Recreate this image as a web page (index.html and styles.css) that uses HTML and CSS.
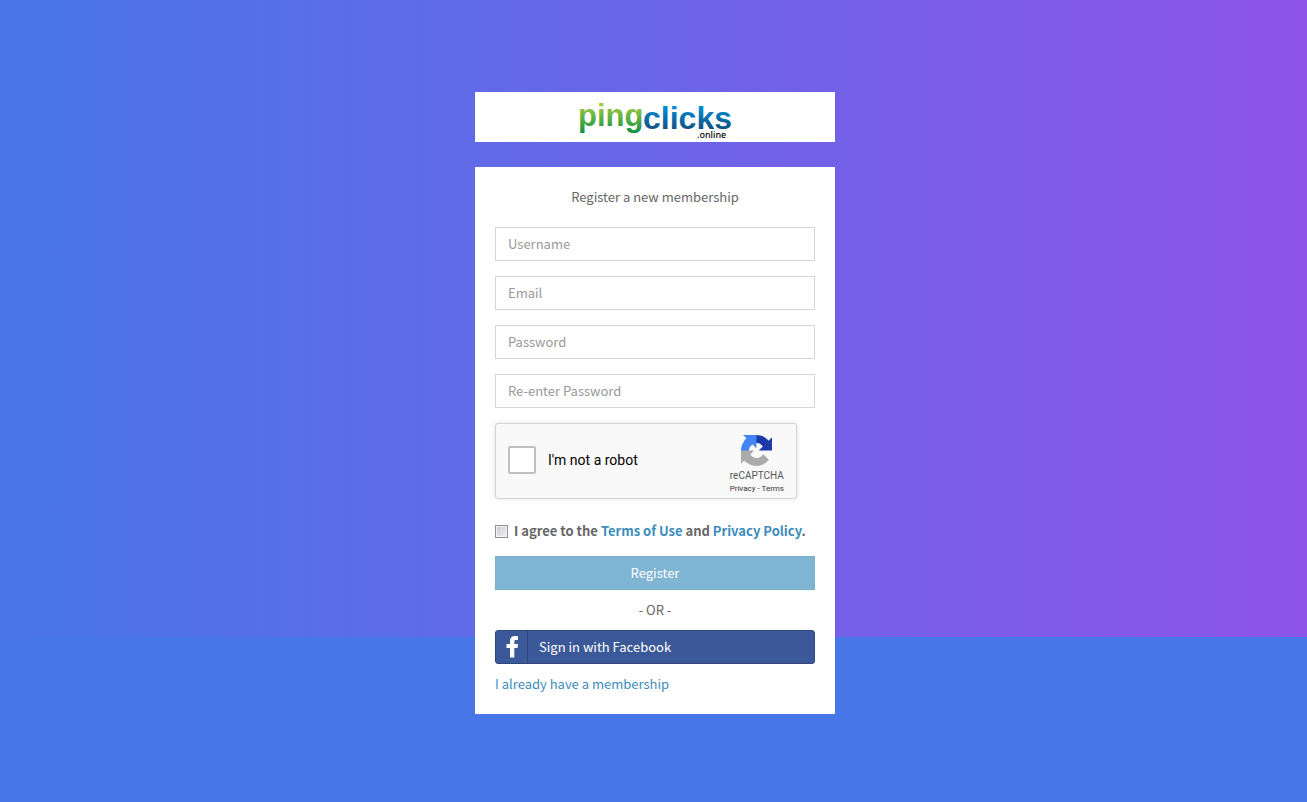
FILE: index.html
```html
<!DOCTYPE html>
<html lang="en">
<head>
<meta charset="utf-8">
<title>Register | pingclicks.online</title>
<meta name="viewport" content="width=device-width, initial-scale=1">
<link rel="stylesheet" href="styles.css">
</head>
<body>
<main class="register">
  <header class="logo">
    <svg class="logo-art" viewBox="0 0 160 50" role="img" aria-label="pingclicks.online">
      <defs>
        <linearGradient id="leaf" gradientUnits="userSpaceOnUse" x1="0" y1="12" x2="0" y2="42">
          <stop offset="0" stop-color="#a9cc42"/><stop offset="1" stop-color="#0b8f45"/>
        </linearGradient>
        <linearGradient id="sea" gradientUnits="userSpaceOnUse" x1="0" y1="14" x2="0" y2="40">
          <stop offset="0" stop-color="#0090d8"/><stop offset="1" stop-color="#124a78"/>
        </linearGradient>
      </defs>
      <text class="logo-ping" x="3" y="34" fill="url(#leaf)">ping</text>
      <text class="logo-clicks" x="68" y="37" fill="url(#sea)">clicks</text>
      <text class="logo-online" x="122" y="46">.online</text>
    </svg>
  </header>
  <form class="card">
    <p class="intro">Register a new membership</p>
    <input class="field" type="text" placeholder="Username" aria-label="Username">
    <input class="field" type="email" placeholder="Email" aria-label="Email">
    <input class="field" type="password" placeholder="Password" aria-label="Password">
    <input class="field" type="password" placeholder="Re-enter Password" aria-label="Re-enter Password">
    <div class="captcha">
      <label class="captcha-check"><input class="captcha-box" type="checkbox">I'm not a robot</label>
      <div class="captcha-brand">
        <svg class="captcha-icon" viewBox="0 0 64 64" aria-hidden="true">
          <path fill="#1c3aa9" d="M64 31.955l-.033-1.370V4.687l-7.160 7.160C50.948 4.674 42.033.093 32.050.093c-10.400 0-19.622 4.960-25.458 12.640l11.736 11.860a15.550 15.550 0 0 1 4.754-5.334c2.050-1.600 4.952-2.906 8.968-2.906.485 0 .860.057 1.135.163 4.976.393 9.288 3.140 11.828 7.124l-8.307 8.307z"/>
          <path fill="#4285f4" d="M31.862.094l-1.370.033H4.594l7.160 7.160C4.580 13.147 0 22.060 0 32.046c0 10.400 4.960 19.622 12.640 25.458L24.500 45.768a15.560 15.560 0 0 1-5.334-4.754c-1.600-2.050-2.906-4.952-2.906-8.968 0-.485.057-.860.163-1.135.393-4.976 3.140-9.288 7.124-11.828l8.307 8.307z"/>
          <path fill="#ababab" d="M.001 32.045l.033 1.370v25.898l7.160-7.160c5.860 7.173 14.774 11.754 24.760 11.754 10.400 0 19.622-4.960 25.458-12.640l-11.736-11.860a15.550 15.550 0 0 1-4.754 5.334c-2.050 1.600-4.952 2.906-8.968 2.906-.485 0-.860-.057-1.135-.163-4.976-.393-9.288-3.140-11.828-7.124l8.307-8.307z"/>
        </svg>
        <span class="captcha-name">reCAPTCHA</span>
        <span class="captcha-links"><a href="#">Privacy</a> - <a href="#">Terms</a></span>
      </div>
    </div>
    <div class="agree">
      <input class="agree-box" type="checkbox" id="agree">
      <label for="agree">I agree to the <a href="#">Terms of Use</a> and <a href="#">Privacy Policy</a>.</label>
    </div>
    <button class="submit" type="submit">Register</button>
    <p class="or">- OR -</p>
    <button class="facebook" type="button">
      <span class="facebook-mark">
        <svg class="facebook-icon" viewBox="0 0 12 22" aria-hidden="true"><path fill="#fff" d="M12 .2v3.700H10c-1.300 0-1.700.7-1.700 1.700V8H12l-.5 3.900H8.300V21.500H4V11.900H.5V8H4V5C4 1.700 6 0 9 0c1.400 0 2.600.1 3 .2z"/></svg>
      </span>
      Sign in with Facebook
    </button>
    <a class="login" href="#">I already have a membership</a>
  </form>
</main>
</body>
</html>
```
FILE: styles.css
```css
* { box-sizing: border-box; }

body {
  margin: 0;
  min-height: 100vh;
  background: #4776e6 linear-gradient(to right, #4776e6, #8e54e9) no-repeat;
  background-size: 100% 637px;
  font: 13px/20px "Noto Sans CJK SC", "Noto Sans", sans-serif;
  color: #666;
}

a { color: #3c8dbc; text-decoration: none; }
button, input { font: inherit; }

.register {
  display: flex;
  flex-direction: column;
  align-items: center;
  gap: 25px;
  padding: 92px 0 88px 3px;
}

.logo, .card { width: 100%; max-width: 360px; background: #fff; }
.logo { display: flex; justify-content: center; }
.logo-art { width: 160px; height: 50px; }
.logo-ping { font: bold 31px "Liberation Sans", sans-serif; }
.logo-clicks { font: bold 32px "Liberation Sans", sans-serif; }
.logo-online { font: 500 9px "Noto Sans", sans-serif; fill: #000; }

.card { display: flex; flex-direction: column; padding: 20px; }
.intro { margin: 0 0 20px; text-align: center; }

.field {
  width: 100%;
  height: 34px;
  margin: 0 0 15px;
  padding: 5px 12px 7px;
  border: 1px solid #d2d6de;
  border-radius: 0;
  background: #fff;
  color: #555;
}
.field::placeholder { color: #999; opacity: 1; }

.captcha {
  display: flex;
  justify-content: space-between;
  width: 302px;
  max-width: 100%;
  height: 76px;
  padding: 0 12px;
  border: 1px solid #d3d3d3;
  border-radius: 3px;
  background: #f9f9f9;
  box-shadow: 0 0 4px 1px rgba(0, 0, 0, .08);
  font-family: Roboto, sans-serif;
  color: #000;
}
.captcha-check { display: flex; align-items: center; gap: 12px; padding-bottom: 3px; font-size: 14px; }
.captcha-box {
  appearance: none;
  width: 28px;
  height: 28px;
  margin: 0;
  border: 2px solid #c1c1c1;
  border-radius: 2px;
  background: #fff;
}
.captcha-brand { display: flex; flex-direction: column; align-items: center; padding-top: 11px; color: #555; }
.captcha-icon { width: 31px; height: 31px; }
.captcha-name { margin-top: 4px; font-size: 10px; line-height: 12px; }
.captcha-links { font-size: 8px; line-height: 14px; color: #333; }
.captcha-links a { color: inherit; }

.agree { display: flex; align-items: center; gap: 6px; margin: 22px 0 15px; font-weight: bold; }
.agree-box {
  appearance: none;
  width: 13px;
  height: 13px;
  margin: 0;
  border: 1px solid #8e8f8f;
  background: linear-gradient(135deg, #c4c8d0, #f4f4f4);
  box-shadow: inset 0 0 0 1px #f4f4f4;
}

.submit {
  height: 34px;
  border: 1px solid #7badca;
  background: #80b4d3;
  color: #fff;
}
.or { margin: 10px 0; text-align: center; }

.facebook {
  display: flex;
  align-items: center;
  gap: 11px;
  height: 34px;
  padding: 0;
  border: 1px solid #2f477a;
  border-radius: 3px;
  background: #3b5998;
  color: #fff;
}
.facebook-mark {
  display: flex;
  align-items: center;
  justify-content: center;
  width: 32px;
  height: 32px;
  border-right: 1px solid #2f477a;
}
.facebook-icon { width: 12px; height: 22px; }
.login { align-self: flex-start; margin-top: 10px; }
```
